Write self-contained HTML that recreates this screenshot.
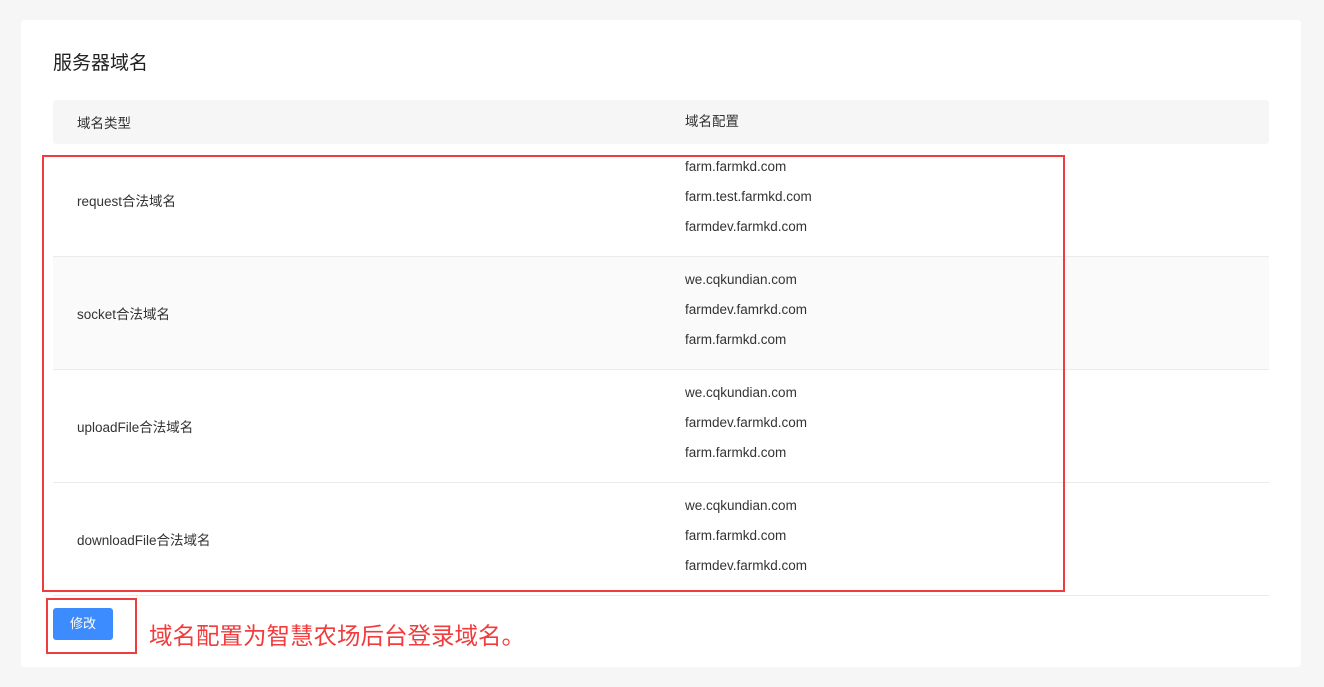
<!DOCTYPE html><html><head><meta charset="utf-8"><style>
body{margin:0;background:#f6f6f6;font-family:"Liberation Sans","Noto Sans CJK SC",sans-serif;color:#333;width:1324px;height:687px;position:relative;overflow:hidden}
.card{position:absolute;left:21px;top:20px;width:1280px;height:647px;background:#fff;border-radius:3px}
.abs{position:absolute}
h1{position:absolute;left:53px;top:50px;margin:0;font-size:19px;font-weight:normal;color:#222;line-height:28px}
.hd{left:53px;top:100px;width:1216px;height:44px;background:#f6f6f6;border-radius:3px;font-size:13.5px}
.row{left:53px;width:1216px;height:112px;border-bottom:1px solid #ebebeb;font-size:13.5px}
.c1{position:absolute;left:24px;top:50%;transform:translateY(-50%)}
.c2{position:absolute;left:632px;top:50%;transform:translateY(-50%);line-height:30px}
.row .c2{margin-top:-3px}
.red{position:absolute;border:2px solid #f03c3c}
</style></head><body>
<div class="card"></div>
<h1>服务器域名</h1>
<div class="abs hd"><span class="c1">域名类型</span><span class="c2">域名配置</span></div>
<div class="abs row" style="top:144px"><span class="c1">request合法域名</span><div class="c2">farm.farmkd.com<br>farm.test.farmkd.com<br>farmdev.farmkd.com</div></div>
<div class="abs row" style="top:257px;background:#fafafa"><span class="c1">socket合法域名</span><div class="c2">we.cqkundian.com<br>farmdev.famrkd.com<br>farm.farmkd.com</div></div>
<div class="abs row" style="top:370px"><span class="c1">uploadFile合法域名</span><div class="c2">we.cqkundian.com<br>farmdev.farmkd.com<br>farm.farmkd.com</div></div>
<div class="abs row" style="top:483px"><span class="c1">downloadFile合法域名</span><div class="c2">we.cqkundian.com<br>farm.farmkd.com<br>farmdev.farmkd.com</div></div>
<div class="red" style="left:42px;top:155px;width:1019px;height:433px"></div>
<div class="abs" style="left:53px;top:608px;width:60px;height:32px;background:#3d8cff;border-radius:3px;color:#fff;font-size:13px;text-align:center;line-height:32px">修改</div>
<div class="red" style="left:46px;top:598px;width:87px;height:52px"></div>
<div class="abs" style="left:149px;top:620px;font-size:23.5px;color:#f03c3c;line-height:32px">域名配置为智慧农场后台登录域名。</div>
</body></html>
